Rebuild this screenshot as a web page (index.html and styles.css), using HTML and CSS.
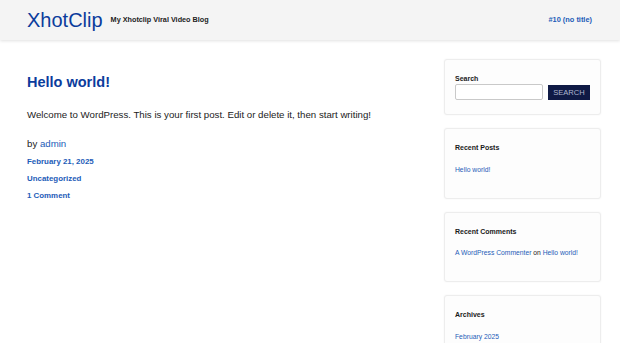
FILE: index.html
```html
<!DOCTYPE html>
<html lang="en">
<head>
    <meta charset="UTF-8">
    <meta name="viewport" content="width=620, initial-scale=1.0">
    <title>XhotClip</title>
    <link rel="stylesheet" href="styles.css">
</head>
<body>
    <header class="site-header">
        <a class="site-title" href="#">XhotClip</a>
        <span class="site-tagline">My Xhotclip Viral Video Blog</span>
        <nav class="site-nav">
            <a href="#">#10 (no title)</a>
        </nav>
    </header>

    <div class="site-body">
        <main class="content">
            <article class="post">
                <h1 class="post-title"><a href="#">Hello world!</a></h1>
                <p class="post-text">Welcome to WordPress. This is your first post. Edit or delete it, then start writing!</p>
                <p class="post-author">by <a href="#">admin</a></p>
                <ul class="post-meta">
                    <li><a href="#">February 21, 2025</a></li>
                    <li><a href="#">Uncategorized</a></li>
                    <li><a href="#">1 Comment</a></li>
                </ul>
            </article>
        </main>

        <aside class="sidebar">
            <section class="widget widget-search">
                <label class="widget-title" for="s">Search</label>
                <form class="search-form">
                    <input type="text" id="s">
                    <button type="button">SEARCH</button>
                </form>
            </section>
            <section class="widget">
                <h2 class="widget-title">Recent Posts</h2>
                <ul class="widget-list">
                    <li><a href="#">Hello world!</a></li>
                </ul>
            </section>
            <section class="widget">
                <h2 class="widget-title">Recent Comments</h2>
                <ul class="widget-list">
                    <li><a href="#">A WordPress Commenter</a> on <a href="#">Hello world!</a></li>
                </ul>
            </section>
            <section class="widget">
                <h2 class="widget-title">Archives</h2>
                <ul class="widget-list">
                    <li><a href="#">February 2025</a></li>
                </ul>
            </section>
        </aside>
    </div>
</body>
</html>
```

FILE: styles.css
```css
* {
    margin: 0;
    padding: 0;
    box-sizing: border-box;
}
body {
    background: #fff;
    color: #222;
    font-family: "Liberation Sans", Arial, sans-serif;
    overflow: hidden;
}
a {
    color: #1d5cb8;
    text-decoration: none;
}

/* Header */
.site-header {
    height: 40px;
    background: #f4f4f4;
    display: flex;
    align-items: center;
    padding: 0 28px 0 27px;
    box-shadow: 0 1px 3px rgba(0, 0, 0, 0.12);
    position: relative;
}
.site-title {
    font-size: 20px;
    line-height: 24px;
    color: #0b3c9c;
}
.site-tagline {
    margin-left: 8px;
    font-size: 7.26px;
    line-height: 10px;
    font-weight: bold;
    color: #222;
}
.site-nav {
    margin-left: auto;
    font-size: 7.4px;
    line-height: 10px;
    font-weight: bold;
}

/* Layout */
.site-body {
    display: flex;
    padding: 0 19px 0 27px;
}
.content {
    flex: 1;
    padding-top: 33px;
}
.sidebar {
    width: 157px;
    padding-top: 19px;
    display: flex;
    flex-direction: column;
    gap: 13px;
}

/* Post */
.post-title {
    font-size: 14.5px;
    line-height: 18px;
}
.post-title a {
    color: #0b3c9c;
}
.post-text {
    margin-top: 17px;
    font-size: 9.68px;
    line-height: 14px;
}
.post-author {
    margin-top: 14.5px;
    font-size: 9.68px;
    line-height: 14px;
}
.post-meta {
    list-style: none;
    margin-top: 5.7px;
    display: flex;
    flex-direction: column;
    gap: 5px;
    font-size: 7.9px;
    line-height: 12px;
    font-weight: bold;
}

/* Widgets */
.widget {
    background: #fdfdfd;
    border: 1px solid #ededed;
    border-radius: 3px;
    box-shadow: 0 0 2px rgba(0, 0, 0, 0.06);
    padding: 14px 10px 14px;
}
.widget-title {
    display: block;
    font-size: 7px;
    line-height: 10px;
    font-weight: bold;
    color: #1a1a1a;
}
.widget-list {
    list-style: none;
    margin-top: 11.5px;
    margin-bottom: 9px;
    font-size: 6.75px;
    line-height: 10px;
}
.search-form {
    display: flex;
    align-items: center;
}
.search-form input {
    width: 88px;
    height: 16px;
    border: 1px solid #c9c9c9;
    border-radius: 2px;
    background: #fff;
}
.search-form button {
    margin-left: 5px;
    width: 43px;
    height: 15px;
    border: none;
    background: #0f1a45;
    color: #aeb5cf;
    font-family: "Liberation Sans", Arial, sans-serif;
    font-size: 7.6px;
    line-height: 15px;
}
```
